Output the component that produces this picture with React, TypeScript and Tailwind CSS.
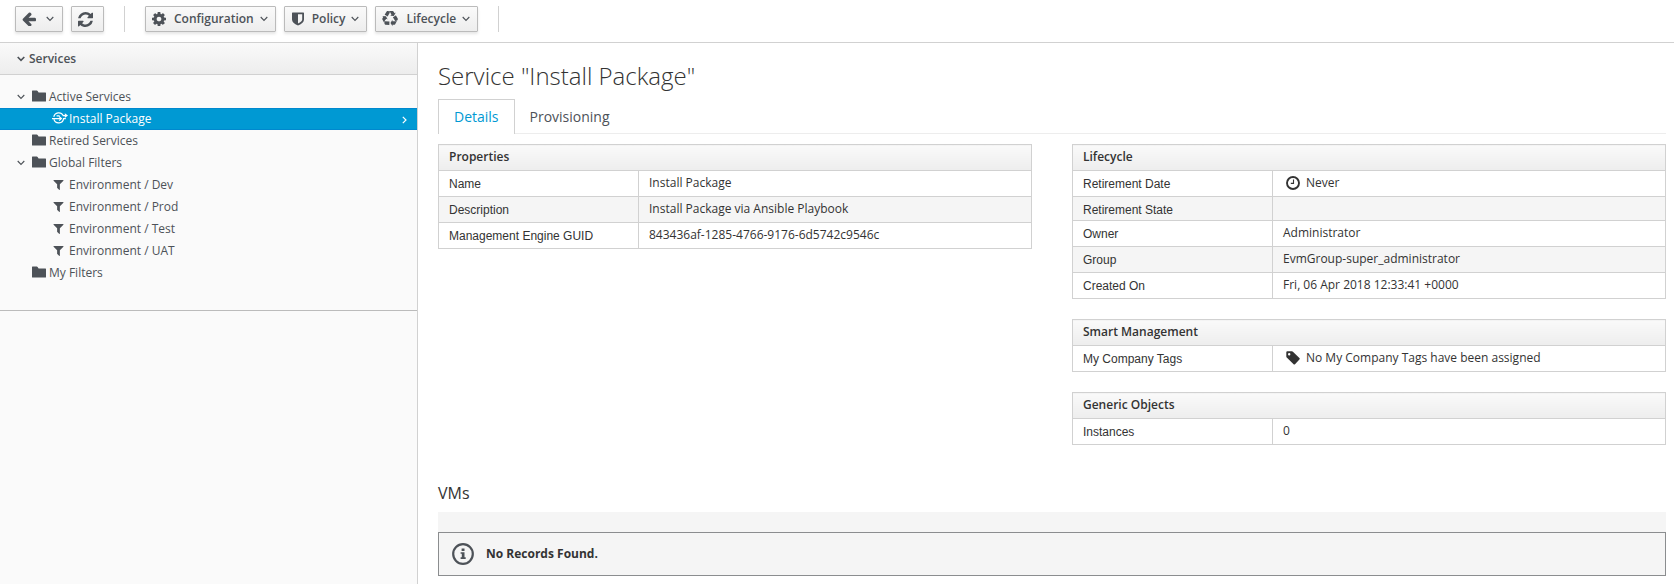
import React from "react";

type IconProps = { className?: string };

const glyphs = {
  arrowLeft:
    "M1664 896v128q0 53-32.5 90.5t-84.5 37.5h-704l293 294q38 36 38 90t-38 90l-75 76q-37 37-90 37-52 0-91-37l-651-652q-37-37-37-90 0-52 37-91l651-650q38-38 91-38 52 0 90 38l75 74q38 38 38 91t-38 91l-293 293h704q52 0 84.5 37.5t32.5 90.5z",
  refresh:
    "M1639 1056q0 5-1 7-64 268-268 434.5t-478 166.5q-146 0-282.5-55t-243.5-157l-129 129q-19 19-45 19t-45-19-19-45v-448q0-26 19-45t45-19h448q26 0 45 19t19 45-19 45l-137 137q71 66 161 102t187 36q134 0 250-65t186-179q11-17 53-117 8-23 30-23h192q13 0 22.5 9.5t9.5 22.5zm25-800v448q0 26-19 45t-45 19h-448q-26 0-45-19t-19-45 19-45l138-138q-148-137-349-137-134 0-250 65t-186 179q-11 17-53 117-8 23-30 23h-199q-13 0-22.5-9.5t-9.5-22.5v-7q65-268 270-434.5t480-166.5q146 0 284 55.5t245 156.5l130-129q19-19 45-19t45 19 19 45z",
  cog:
    "M1152 896q0-106-75-181t-181-75-181 75-75 181 75 181 181 75 181-75 75-181zm512-109v222q0 12-8 23t-20 13l-185 28q-19 54-39 91 35 50 107 138 10 12 10 25t-9 23q-27 37-99 108t-94 71q-12 0-26-9l-138-108q-44 23-91 38-16 136-29 186-7 28-36 28h-222q-14 0-24.5-8.5t-11.5-21.5l-28-184q-49-16-90-37l-141 107q-10 9-25 9-14 0-25-11-126-114-165-168-7-10-7-23 0-12 8-23 15-21 51-66.5t54-70.5q-27-50-41-99l-183-27q-13-2-21-12.5t-8-23.5v-222q0-12 8-23t19-13l186-28q14-46 39-92-40-57-107-138-10-12-10-24 0-10 9-23 26-36 98.5-107.5t94.5-71.5q13 0 26 10l138 107q44-23 91-38 16-136 29-186 7-28 36-28h222q14 0 24.5 8.5t11.5 21.5l28 184q49 16 90 37l142-107q9-9 24-9 13 0 25 10 129 119 165 170 7 8 7 22 0 12-8 23-15 21-51 66.5t-54 70.5q26 50 41 98l183 28q13 2 21 12.5t8 23.5z",
  filter:
    "M1595 295q17 41-14 70l-493 493v742q0 42-39 59-13 5-25 5-27 0-45-19l-256-256q-19-19-19-45v-486l-493-493q-31-29-14-70 17-39 59-39h1280q42 0 59 39z",
  recycle:
    "M836 1169l-15 368-2 22-420-29q-36-3-67-31.5t-47-65.5q-11-27-14.5-55t4-65 12-55 21.5-64 19-53q78 12 509 28zm-387-586l180 379-147-92q-63 72-111.5 144.5t-72.5 125-39.5 94.5-18.5 63l-4 21-190-357q-17-26-18-56t6-47l8-18q35-63 114-188l-140-86zm1231 517l-188 359q-12 29-36.5 46.5t-43.5 20.5l-18 4q-71 7-219 12l8 164-230-367 211-362 7 173q170 16 283 5t170-33zm-785-924q-47 63-265 435l-317-187-19-12 225-356q20-31 60-45t80-10q24 2 48.5 12t42 21 41.5 33 36 34.5 36 39.5 32 35zm655 307l212 363q18 37 12.5 76t-27.5 74q-13 20-33 37t-38 28-48.5 22-47 16-51.5 14-46 12q-34-72-265-436l313-195zm-143-226l142-83-220 373-419-20 151-86q-34-89-75-166t-75.5-123.5-64.5-80-47-46.5l-17-13 405 1q31-3 58 10.5t39 28.5l11 15q39 61 112 190z",
};

function Glyph({ name, className = "" }: { name: keyof typeof glyphs; className?: string }) {
  return (
    <svg
      viewBox={name === "recycle" ? "0 0 1792 1792" : "128 128 1536 1536"}
      className={`shrink-0 fill-current ${className}`}
      aria-hidden="true"
    >
      <path d={glyphs[name]} />
    </svg>
  );
}

function ChevronDown({ className = "" }: IconProps) {
  return (
    <svg viewBox="0 0 8 6" className={`h-1.5 w-2 shrink-0 ${className}`} fill="none" stroke="currentColor" strokeWidth="1.1" aria-hidden="true">
      <path d="M0.7 1 4 4.4 7.3 1" />
    </svg>
  );
}

function Shield({ className = "" }: IconProps) {
  return (
    <svg viewBox="0 0 12 14" className={`h-3.5 w-3 shrink-0 fill-current ${className}`} aria-hidden="true">
      <path fillRule="evenodd" d="M0.6 0.4h10.8q0.6 0 0.6 0.6v6.4q0 3.6-6 6.2Q0 11 0 7.4V1q0-0.6 0.6-0.6ZM6 2.2v9.2q4.2-1.9 4.2-4V2.2Z" />
    </svg>
  );
}

function Folder() {
  return (
    <svg viewBox="0 0 14 12" className="mb-0.5 h-3 w-3.5 shrink-0 fill-current" aria-hidden="true">
      <path d="M0 0.9Q0 0.4 0.5 0.4H4.8Q5.3 0.4 5.6 0.9L6.6 2.4H13.5Q14 2.4 14 2.9V10.9Q14 11.4 13.5 11.4H0.5Q0 11.4 0 10.9Z" />
    </svg>
  );
}

function ServiceIcon() {
  return (
    <svg viewBox="0 0 16 12" className="mb-0.5 h-3 w-4 shrink-0" fill="none" stroke="currentColor" strokeWidth="1.2" aria-hidden="true">
      <path d="M1.8 4.9A5 5 0 0 1 11.2 3.6H13.2M1.9 7.4A5 5 0 0 0 11.6 6.6H13.8M0 6.6H9.4M7.2 4.6 9.4 6.6 7.2 8.6M4.6 3.9H7.6" />
      <path d="M12.8 1.2 16 3.6 12.8 6Z" fill="currentColor" stroke="none" />
    </svg>
  );
}

function Clock() {
  return (
    <svg viewBox="0 0 14 14" className="size-3.5 shrink-0" fill="none" stroke="currentColor" aria-hidden="true">
      <circle cx="7" cy="7" r="6" strokeWidth="1.9" />
      <path d="M7.5 3.5V7.4H4.8" strokeWidth="1.1" />
    </svg>
  );
}

function Tag() {
  return (
    <svg viewBox="0 0 14 14" className="size-3.5 shrink-0 fill-current" aria-hidden="true">
      <path fillRule="evenodd" d="M0.3 1.3Q0.3 0.3 1.3 0.3H5.8Q6.6 0.3 7.2 0.9L13.4 7.1Q14.1 7.8 13.4 8.5L9 13.2Q8.3 13.8 7.6 13.2L1 6.8Q0.3 6.2 0.3 5.4ZM3.2 2A1.2 1.2 0 1 0 3.2 4.4 1.2 1.2 0 1 0 3.2 2Z" />
    </svg>
  );
}

function Info() {
  return (
    <svg viewBox="0 0 22 22" className="size-[22px] shrink-0 text-[#4d5258]" aria-hidden="true">
      <circle cx="11" cy="11" r="9.8" fill="none" stroke="currentColor" strokeWidth="2.2" />
      <path fill="currentColor" d="M9.6 5.4H12.5V7.9H9.6ZM8.6 9.2H12.5V14.3H13.7V16H8.6V14.3H9.8V10.8H8.6Z" />
    </svg>
  );
}

function ToolButton({ label, text, icon, menu }: { label: string; text?: string; icon: React.ReactNode; menu?: boolean }) {
  return (
    <button
      type="button"
      aria-label={label}
      className="flex h-[26px] items-center rounded-[1px] border border-[#bbb] bg-linear-to-b from-[#fafafa] to-[#ededed] px-1.5 font-semibold text-[#4d5258] shadow-[0_2px_3px_rgba(3,3,3,0.1)]"
    >
      {icon}
      {text && <span className="ml-2">{text}</span>}
      {menu && <ChevronDown className={text ? "ml-1.5 mr-px" : "ml-2.5 mr-0.5"} />}
    </button>
  );
}

type NodeProps = { label: string; icon: React.ReactNode; child?: boolean; open?: boolean; selected?: boolean };

function TreeNode({ label, icon, child, open, selected }: NodeProps) {
  return (
    <li
      role="treeitem"
      aria-selected={!!selected}
      aria-expanded={open}
      className={`flex h-[22px] items-center border-y pr-2.5 ${child ? "pl-[52px]" : "pl-4"} ${
        selected ? "border-[#0088ce] bg-[#0099d3] text-white" : "border-transparent"
      }`}
    >
      {!child && <span className="flex w-4 shrink-0 items-center">{open && <ChevronDown className="ml-px" />}</span>}
      <span className="flex w-[17px] shrink-0 items-center">{icon}</span>
      <span className="grow">{label}</span>
      {selected && (
        <svg viewBox="0 0 5 8" className="mt-0.5 h-2 w-[5px]" fill="none" stroke="currentColor" strokeWidth="1.2" aria-hidden="true">
          <path d="M0.8 0.8 4 4 0.8 7.2" />
        </svg>
      )}
    </li>
  );
}

type Row = { label: string; value: string; icon?: React.ReactNode };

function Summary({ title, rows }: { title: string; rows: Row[] }) {
  return (
    <table className="mb-5 w-full table-fixed border-collapse border border-[#d1d1d1] text-[#333]">
      <colgroup>
        <col className="w-[200px]" />
        <col />
      </colgroup>
      <thead>
        <tr>
          <th colSpan={2} className="h-[26px] border border-[#d1d1d1] bg-linear-to-b from-[#fafafa] to-[#ededed] px-2.5 pb-0.5 text-left leading-[23px] font-semibold">
            {title}
          </th>
        </tr>
      </thead>
      <tbody>
        {rows.map((r) => (
          <tr key={r.label} className="even:bg-[#f5f5f5]">
            <th scope="row" className="border border-[#d1d1d1] px-2.5 pt-1.5 pb-0.5 text-left align-top font-['Liberation_Sans',sans-serif] leading-[15px] font-normal">
              {r.label}
            </th>
            <td className="border border-[#d1d1d1] px-2.5 pt-0.5 pb-[3px] align-top leading-5">
              {r.icon ? (
                <span className="flex items-center pl-[3px]">
                  {r.icon}
                  <span className="ml-1.5">{r.value}</span>
                </span>
              ) : (
                r.value
              )}
            </td>
          </tr>
        ))}
      </tbody>
    </table>
  );
}

const filters = ["Environment / Dev", "Environment / Prod", "Environment / Test", "Environment / UAT"];

export default function App() {
  return (
    <div className="flex min-h-screen flex-col bg-white font-['Open_Sans',sans-serif] text-xs text-[#333]">
      <div role="toolbar" className="flex h-[43px] shrink-0 gap-2 border-b border-[#d1d1d1] px-[15px] pt-1.5">
        <ToolButton label="Back" icon={<Glyph name="arrowLeft" className="size-3.5" />} menu />
        <ToolButton label="Reload" icon={<Glyph name="refresh" className="mr-1 size-[15px]" />} />
        <span className="mx-3 h-[26px] w-px bg-[#d1d1d1]" />
        <ToolButton label="Configuration" text="Configuration" icon={<Glyph name="cog" className="size-3.5" />} menu />
        <ToolButton label="Policy" text="Policy" icon={<Shield className="ml-px" />} menu />
        <ToolButton label="Lifecycle" text="Lifecycle" icon={<Glyph name="recycle" className="size-4" />} menu />
        <span className="mx-3 h-[26px] w-px bg-[#d1d1d1]" />
      </div>

      <div className="flex grow">
        <aside className="w-[418px] shrink-0 border-r border-[#d1d1d1] bg-[#fafafa] text-[#4d5258]">
          <h2>
            <button
              type="button"
              aria-expanded="true"
              className="flex h-8 w-full items-center border-b border-[#d1d1d1] bg-linear-to-b from-[#fafafa] to-[#ededed] pl-[17px] font-semibold"
            >
              <ChevronDown className="mr-1 stroke-[1.6]" />
              Services
            </button>
          </h2>
          <ul role="tree" aria-label="Services" className="border-b border-[#bbb] pt-[11px] pb-[26px]">
            <TreeNode label="Active Services" icon={<Folder />} open />
            <TreeNode label="Install Package" icon={<ServiceIcon />} child selected />
            <TreeNode label="Retired Services" icon={<Folder />} />
            <TreeNode label="Global Filters" icon={<Folder />} open />
            {filters.map((f) => (
              <TreeNode key={f} label={f} icon={<Glyph name="filter" className="mb-px ml-px size-[11px]" />} child />
            ))}
            <TreeNode label="My Filters" icon={<Folder />} />
          </ul>
        </aside>

        <main className="min-w-0 grow pr-2 pl-5">
          <h1 className="pt-[17px] text-2xl leading-8 font-light">Service "Install Package"</h1>
          <div role="tablist" className="mt-[7px] mb-2.5 flex h-[35px] border-b border-[#ededed] text-sm">
            <button type="button" role="tab" aria-selected="true" className="-mb-px border border-b-0 border-[#d1d1d1] bg-white px-[15px] text-[#0099d3]">
              Details
            </button>
            <button type="button" role="tab" aria-selected="false" className="-mb-px border border-b-0 border-transparent px-3.5 text-[#4d5258]">
              Provisioning
            </button>
          </div>

          <div className="grid grid-cols-2 gap-10">
            <div>
              <Summary
                title="Properties"
                rows={[
                  { label: "Name", value: "Install Package" },
                  { label: "Description", value: "Install Package via Ansible Playbook" },
                  { label: "Management Engine GUID", value: "843436af-1285-4766-9176-6d5742c9546c" },
                ]}
              />
            </div>
            <div>
              <Summary
                title="Lifecycle"
                rows={[
                  { label: "Retirement Date", value: "Never", icon: <Clock /> },
                  { label: "Retirement State", value: "" },
                  { label: "Owner", value: "Administrator" },
                  { label: "Group", value: "EvmGroup-super_administrator" },
                  { label: "Created On", value: "Fri, 06 Apr 2018 12:33:41 +0000" },
                ]}
              />
              <Summary title="Smart Management" rows={[{ label: "My Company Tags", value: "No My Company Tags have been assigned", icon: <Tag /> }]} />
              <Summary title="Generic Objects" rows={[{ label: "Instances", value: "0" }]} />
            </div>
          </div>

          <h3 className="mt-4 text-base leading-6">VMs</h3>
          <div className="mt-[7px] bg-[#f5f5f5] pt-5">
            <div className="flex h-11 items-center gap-3 border border-[#8b8d8f] px-[13px]">
              <Info />
              <strong className="font-bold">No Records Found.</strong>
            </div>
          </div>
        </main>
      </div>
    </div>
  );
}
